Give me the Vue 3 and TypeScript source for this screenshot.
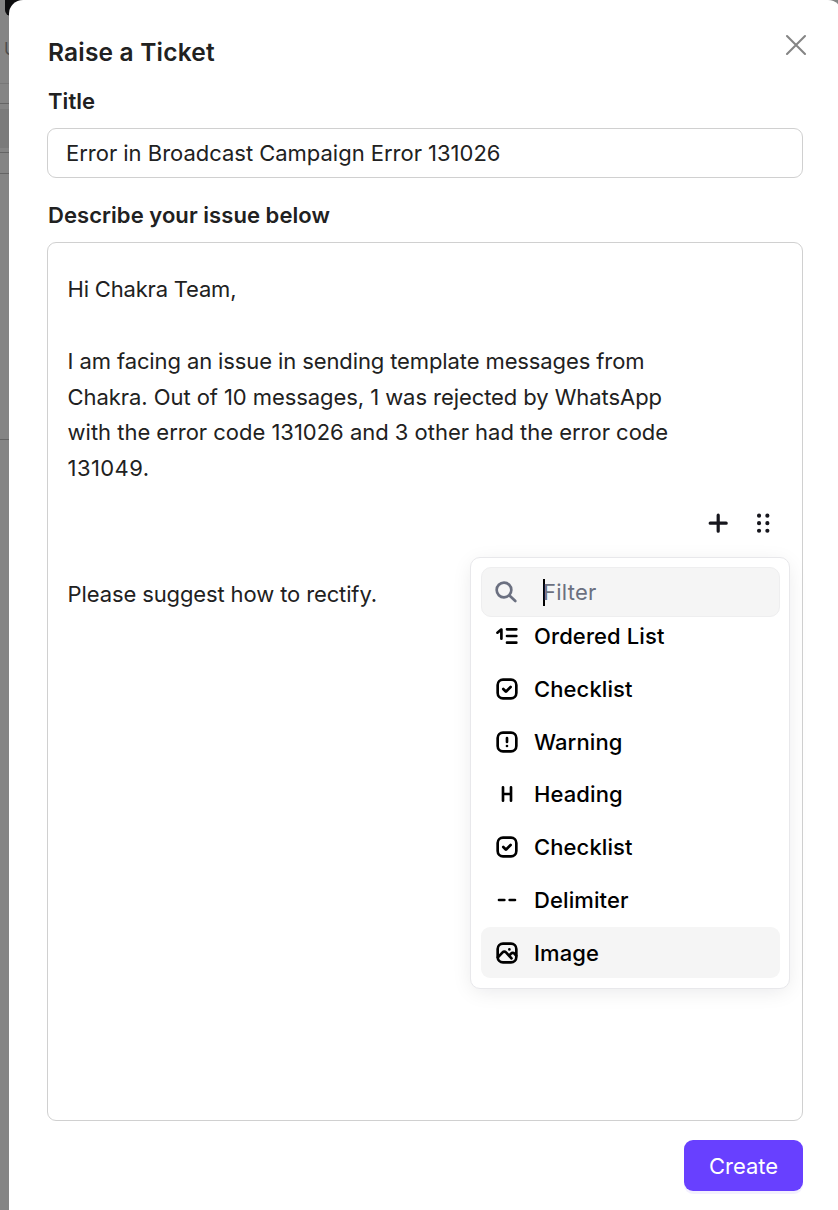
<script setup lang="ts">
import { ref } from 'vue'

type IconName = 'ordered' | 'check' | 'warning' | 'heading' | 'delimiter' | 'image'

interface Tool {
  icon: IconName
  label: string
  active?: boolean
}

const title = ref('Error in Broadcast Campaign Error 131026')

const message: string[] = [
  'I am facing an issue in sending template messages from',
  'Chakra. Out of 10 messages, 1 was rejected by WhatsApp',
  'with the error code 131026 and 3 other had the error code',
  '131049.',
]

const tools: Tool[] = [
  { icon: 'ordered', label: 'Ordered List' },
  { icon: 'check', label: 'Checklist' },
  { icon: 'warning', label: 'Warning' },
  { icon: 'heading', label: 'Heading' },
  { icon: 'check', label: 'Checklist' },
  { icon: 'delimiter', label: 'Delimiter' },
  { icon: 'image', label: 'Image', active: true },
]
</script>

<template>
  <div class="page">
    <div class="backdrop" aria-hidden="true">
      <span class="block"></span>
      <span class="letter">U</span>
      <span class="rule r1"></span>
      <span class="rule r2"></span>
      <span class="band"></span>
      <span class="rule r3"></span>
      <span class="rule r4"></span>
      <span class="rule r5"></span>
    </div>

    <main class="panel">
      <header class="head">
        <h1>Raise a Ticket</h1>
        <svg class="close" viewBox="0 0 22 22"><path d="M2 2L20 20M20 2L2 20" /></svg>
      </header>

      <label class="label title-label">Title</label>
      <div class="field"><span>{{ title }}</span></div>

      <label class="label desc-label">Describe your issue below</label>
      <section class="editor">
        <p class="greet">Hi Chakra Team,</p>
        <p class="body">
          <span v-for="(line, i) in message" :key="i" :class="'l' + i">{{ line }}</span>
        </p>
        <p class="closing">Please suggest how to rectify.</p>

        <div class="toolbar">
          <svg class="tool" viewBox="0 0 24 24"><path d="M12 7V17M7 12H17" /></svg>
          <svg class="tool dots" viewBox="0 0 24 24">
            <path d="M9.4 7.3h.01M14.6 7.3h.01M9.4 12h.01M14.6 12h.01M9.4 16.7h.01M14.6 16.7h.01" />
          </svg>
        </div>

        <div class="popover">
          <div class="search">
            <svg class="icon" viewBox="0 0 24 24">
              <circle cx="10.5" cy="10.5" r="5.5" />
              <path d="M15 15L19 18.8" />
            </svg>
            <i class="caret"></i>
            <span class="placeholder">Filter</span>
          </div>
          <div class="list">
            <div v-for="(t, i) in tools" :key="i" class="item" :class="{ active: t.active }">
              <svg class="icon" viewBox="0 0 24 24">
                <template v-if="t.icon === 'ordered'">
                  <path d="M12 7H19M12 12H19M12 17H19" />
                  <path d="M7.8 14V7.2135C7.8 7.1287 7.7011 7.0824 7.636 7.1367L4.8 9.5" />
                </template>
                <template v-else-if="t.icon === 'check'">
                  <rect x="5" y="5" width="14" height="14" rx="4" />
                  <path d="M9.2 12L11.0586 13.8586C11.1367 13.9367 11.2633 13.9367 11.3414 13.8586L14.7 10.5" />
                </template>
                <template v-else-if="t.icon === 'warning'">
                  <rect x="5" y="5" width="14" height="14" rx="4" />
                  <path d="M12 9V12M12 15.02V15.01" />
                </template>
                <path v-else-if="t.icon === 'heading'" d="M9 7V17M15 7V17M9 12H15" />
                <path v-else-if="t.icon === 'delimiter'" d="M6 12H10M14 12H18" />
                <template v-else>
                  <rect x="5" y="5" width="14" height="14" rx="4" />
                  <path d="M5.1397 15.32L8.6906 11.5661C9.0293 11.2036 9.4887 11 9.9677 11C10.4467 11 10.9061 11.2036 11.2449 11.5661L15.3871 16M13.5806 14.0664L15.0132 12.533C15.3519 12.1705 15.8113 11.9668 16.2903 11.9668C16.7693 11.9668 17.2287 12.1705 17.5675 12.533L18.841 13.9634" />
                  <path d="M13.7778 9.3333H13.7867" />
                </template>
              </svg>
              <span>{{ t.label }}</span>
            </div>
          </div>
        </div>
      </section>

      <footer class="foot"><button type="button">Create</button></footer>
    </main>
  </div>
</template>

<style>
body { margin: 0; overflow: hidden; }
</style>

<style scoped>
.page {
  position: relative;
  width: 838px;
  height: 1210px;
  overflow: hidden;
  background: #858585;
  font-family: Inter, 'Liberation Sans', sans-serif;
  font-size: 22px;
  color: #212121;
}
.page * { box-sizing: border-box; }
.backdrop span { position: absolute; display: block; }
.backdrop .block { left: 5px; top: -10px; width: 30px; height: 26px; border-radius: 6px; background: #0d0d0f; }
.backdrop .letter { left: 4px; top: 38px; font-size: 17px; line-height: 22px; color: #4e4e4e; }
.backdrop .rule { left: 0; width: 12px; height: 1px; background: #656565; }
.backdrop .r1 { top: 83px; background: #787878; }
.backdrop .r2 { top: 103px; }
.backdrop .r3 { top: 152px; }
.backdrop .r4 { top: 173px; }
.backdrop .r5 { top: 439px; }
.backdrop .band { left: 0; top: 109px; width: 12px; height: 39px; background: #7b7b7b; }

.panel {
  position: relative;
  width: 833px;
  height: 1210px;
  margin-left: 9px;
  padding: 30px 39px 0 38px;
  display: flex;
  flex-direction: column;
  background: #fff;
  border-radius: 14px 14px 0 0;
}
.head { display: flex; justify-content: space-between; height: 44px; margin-left: 1px; }
h1 { margin: 0; font-size: 24.5px; line-height: 44px; font-weight: 600; letter-spacing: 0.19px; }
.close { width: 22px; height: 22px; margin: 4px -4px 0 0; fill: none; stroke: #858585; stroke-width: 2.1; stroke-linecap: round; }
.label { display: block; margin-left: 1px; line-height: 30px; font-weight: 600; letter-spacing: 0.06px; white-space: nowrap; }
.title-label { margin-top: 12px; }
.field {
  height: 50px;
  margin-top: 12px;
  padding-left: 18px;
  line-height: 49px;
  letter-spacing: -0.02px;
  border: 1px solid #d0d0d0;
  border-radius: 9px;
  white-space: nowrap;
}
.desc-label { margin-top: 22px; }
.editor {
  position: relative;
  height: 879px;
  margin-top: 12px;
  padding: 29px 20px 0 19.6px;
  border: 1px solid #d0d0d0;
  border-radius: 9px;
}
p { margin: 0; line-height: 35.7px; white-space: nowrap; }
.greet { letter-spacing: -0.2px; }
.body { margin-top: 36.3px; }
.body span { display: block; width: max-content; }
.l0 { letter-spacing: -0.11px; }
.l1 { letter-spacing: -0.07px; }
.l2 { letter-spacing: -0.02px; }
.l3 { letter-spacing: 0.4px; }
.closing { margin-top: 90px; letter-spacing: -0.12px; }

.toolbar { position: absolute; left: 651px; top: 261px; display: flex; gap: 7px; }
.tool { width: 38.4px; height: 38.4px; fill: none; stroke: #16161d; stroke-width: 2; stroke-linecap: round; }
.dots { stroke-width: 2.6; }

.popover {
  position: absolute;
  left: 422px;
  top: 314px;
  width: 320px;
  height: 432px;
  padding: 9px 9px 10px 10px;
  background: #fff;
  border: 1px solid #e8e8eb;
  border-radius: 10px;
  box-shadow: 0 4px 21px -3px rgba(13, 20, 33, 0.1);
}
.icon { flex: none; width: 32px; height: 32px; fill: none; stroke: currentColor; stroke-width: 2; stroke-linecap: round; stroke-linejoin: round; }
.search {
  display: flex;
  align-items: center;
  height: 50px;
  padding-left: 8px;
  background: #f5f5f5;
  border: 1px solid #eeeeef;
  border-radius: 10px;
  color: #6b7080;
}
.caret { width: 2px; height: 27px; margin-left: 21px; background: #000; }
.placeholder { margin-left: -2px; letter-spacing: 0.25px; }
.list { display: flex; flex-direction: column; justify-content: flex-end; gap: 1.7px; height: 361px; overflow: hidden; }
.item {
  display: flex;
  flex: none;
  align-items: center;
  height: 51px;
  padding-left: 10px;
  border-radius: 9px;
  color: #000;
  font-weight: 500;
  letter-spacing: 0.1px;
}
.item span { margin-left: 11px; }
.item.active { background: #f5f5f5; }

.foot { display: flex; justify-content: flex-end; margin-top: 19px; }
button {
  width: 119px;
  height: 51px;
  padding: 0;
  font: inherit;
  color: #fff;
  background: #6840ff;
  border: 0;
  border-radius: 9px;
  box-shadow: 0 3px 0 rgba(104, 64, 255, 0.08);
}
</style>
